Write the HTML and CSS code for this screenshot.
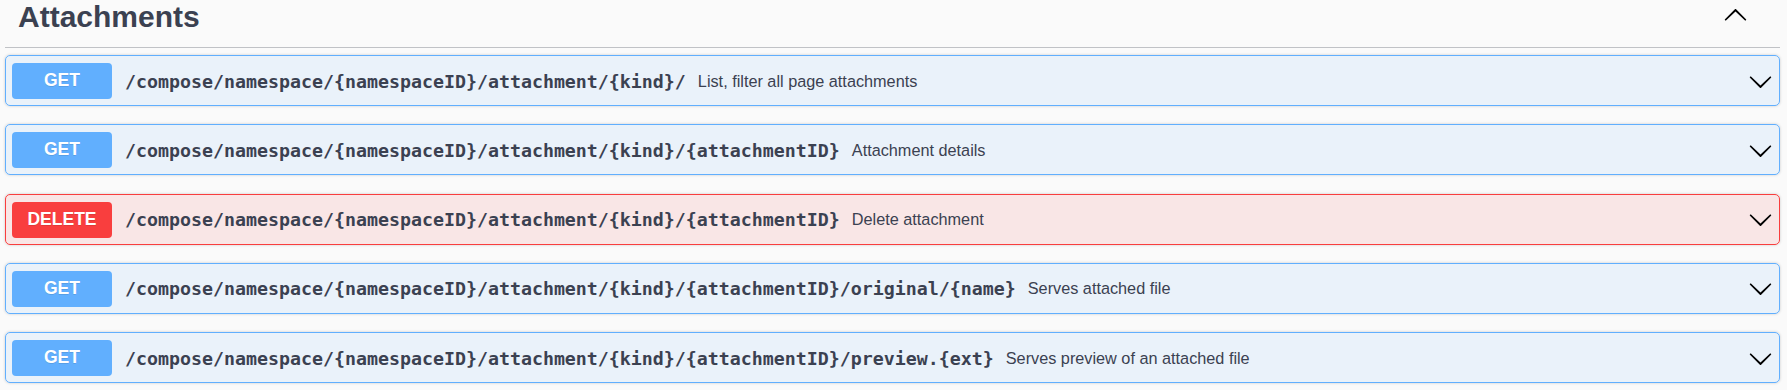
FILE: index.html
```html
<!DOCTYPE html>
<html lang="en">
<head>
<meta charset="utf-8">
<title>Attachments</title>
<link rel="stylesheet" href="styles.css">
</head>
<body>
<div class="wrapper">
  <div class="tag-header">
    <h3 class="tag-title">Attachments</h3>
    <button class="tag-toggle" aria-label="Collapse">
      <svg class="chev chev-up" viewBox="0 0 20 20" width="25" height="25"><path d="M17.418 6.109c.272-.268.709-.268.979 0s.271.701 0 .969l-7.908 7.83c-.27.268-.707.268-.979 0l-7.908-7.83c-.27-.268-.27-.701 0-.969.271-.268.709-.268.979 0L10 13.25l7.418-7.141z"/></svg>
    </button>
  </div>

  <div class="opblock get">
    <span class="method">GET</span>
    <span class="path">/compose/namespace/{namespaceID}/attachment/{kind}/</span>
    <span class="desc">List, filter all page attachments</span>
    <svg class="chev" viewBox="0 0 20 20" width="25" height="25"><path d="M17.418 6.109c.272-.268.709-.268.979 0s.271.701 0 .969l-7.908 7.83c-.27.268-.707.268-.979 0l-7.908-7.83c-.27-.268-.27-.701 0-.969.271-.268.709-.268.979 0L10 13.25l7.418-7.141z"/></svg>
  </div>

  <div class="opblock get">
    <span class="method">GET</span>
    <span class="path">/compose/namespace/{namespaceID}/attachment/{kind}/{attachmentID}</span>
    <span class="desc">Attachment details</span>
    <svg class="chev" viewBox="0 0 20 20" width="25" height="25"><path d="M17.418 6.109c.272-.268.709-.268.979 0s.271.701 0 .969l-7.908 7.83c-.27.268-.707.268-.979 0l-7.908-7.83c-.27-.268-.27-.701 0-.969.271-.268.709-.268.979 0L10 13.25l7.418-7.141z"/></svg>
  </div>

  <div class="opblock delete">
    <span class="method">DELETE</span>
    <span class="path">/compose/namespace/{namespaceID}/attachment/{kind}/{attachmentID}</span>
    <span class="desc">Delete attachment</span>
    <svg class="chev" viewBox="0 0 20 20" width="25" height="25"><path d="M17.418 6.109c.272-.268.709-.268.979 0s.271.701 0 .969l-7.908 7.83c-.27.268-.707.268-.979 0l-7.908-7.83c-.27-.268-.27-.701 0-.969.271-.268.709-.268.979 0L10 13.25l7.418-7.141z"/></svg>
  </div>

  <div class="opblock get">
    <span class="method">GET</span>
    <span class="path">/compose/namespace/{namespaceID}/attachment/{kind}/{attachmentID}/original/{name}</span>
    <span class="desc">Serves attached file</span>
    <svg class="chev" viewBox="0 0 20 20" width="25" height="25"><path d="M17.418 6.109c.272-.268.709-.268.979 0s.271.701 0 .969l-7.908 7.83c-.27.268-.707.268-.979 0l-7.908-7.83c-.27-.268-.27-.701 0-.969.271-.268.709-.268.979 0L10 13.25l7.418-7.141z"/></svg>
  </div>

  <div class="opblock get">
    <span class="method">GET</span>
    <span class="path">/compose/namespace/{namespaceID}/attachment/{kind}/{attachmentID}/preview.{ext}</span>
    <span class="desc">Serves preview of an attached file</span>
    <svg class="chev" viewBox="0 0 20 20" width="25" height="25"><path d="M17.418 6.109c.272-.268.709-.268.979 0s.271.701 0 .969l-7.908 7.83c-.27.268-.707.268-.979 0l-7.908-7.83c-.27-.268-.27-.701 0-.969.271-.268.709-.268.979 0L10 13.25l7.418-7.141z"/></svg>
  </div>
</div>
</body>
</html>
```
FILE: styles.css
```css
html, body {
  margin: 0;
  padding: 0;
  background: #fafafa;
}
body {
  font-family: "Liberation Sans", Arial, sans-serif;
  color: #3b4151;
}
.wrapper {
  padding: 0 7px 0 5px;
}
.tag-header {
  display: flex;
  align-items: center;
  height: 33px;
  padding: 0 32px 14px 13px;
  border-bottom: 1px solid rgba(59, 65, 81, 0.3);
  margin-bottom: 7px;
}
.tag-title {
  margin: 0;
  font-size: 30px;
  line-height: 33px;
  font-weight: 700;
  color: #3b4151;
  flex: 1;
}
.tag-toggle {
  border: none;
  background: none;
  padding: 0;
  margin: 0;
  width: 25px;
  height: 25px;
  align-self: flex-start;
  margin-top: 3px;
  display: flex;
}
.chev {
  display: block;
  width: 25px;
  height: 25px;
  fill: #000;
  flex: none;
}
.chev-up {
  transform: scaleY(-1);
}
.opblock {
  display: flex;
  align-items: center;
  height: 51px;
  box-sizing: border-box;
  padding: 7px 6px 6px 6px;
  border: 1px solid #61affe;
  border-radius: 5px;
  background: rgba(97, 175, 254, 0.1);
  box-shadow: 0 0 3px rgba(0, 0, 0, 0.19);
  margin-bottom: 18.25px;
}
.opblock.delete {
  border-color: #f93e3e;
  background: rgba(249, 62, 62, 0.1);
}
.method {
  flex: none;
  width: 100px;
  height: 36px;
  line-height: 35px;
  border-radius: 4px;
  background: #61affe;
  color: #fff;
  font-size: 17.5px;
  font-weight: 700;
  text-align: center;
  text-shadow: 0 1px 0 rgba(0, 0, 0, 0.1);
}
.delete .method {
  background: #f93e3e;
}
.path {
  margin-left: 13px;
  font-family: "DejaVu Sans Mono", "Liberation Mono", monospace;
  font-weight: 700;
  font-size: 18.28px;
  color: #3b4151;
}
.desc {
  margin-left: 12px;
  font-size: 16.25px;
  color: #3b4151;
  flex: 1;
}
```
